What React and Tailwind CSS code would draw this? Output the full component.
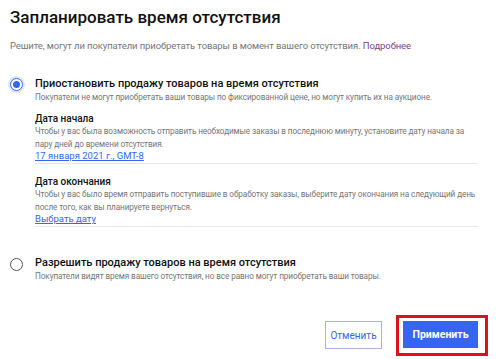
import React, { useState } from 'react';

const Radio = ({ checked, onClick }) => (
  <button
    type="button"
    onClick={onClick}
    className={`flex h-[13px] w-[13px] shrink-0 items-center justify-center rounded-full border ${
      checked ? 'border-[#3665f3] shadow-[0_0_0_2px_#dfe6fb]' : 'border-[#555]'
    } bg-white`}
  >
    {checked && <span className="h-[7px] w-[7px] rounded-full bg-[#3665f3]" />}
  </button>
);

const DateBlock = ({ title, text, link }) => (
  <div className="border-b border-[#e8e8e8] pb-[1px]">
    <div className="text-[10px] font-medium leading-[13px] text-[#111]">{title}</div>
    <p className="text-[8.2px] leading-[12.5px] tracking-[-0.1px] text-[#767676]">{text}</p>
    <a href="#" className="block text-[9.5px] leading-[12px] text-[#3665f3] underline">
      {link}
    </a>
  </div>
);

const App = () => {
  const [mode, setMode] = useState('pause');

  return (
    <div className="h-[359px] w-[500px] overflow-hidden bg-white px-[10px] pt-[6px] font-['Roboto',Arial,sans-serif]">
      <h1 className="text-[17px] font-medium leading-[22px] text-[#111]">Запланировать время отсутствия</h1>
      <p className="mt-[11px] text-[9.5px] leading-[13px] tracking-[-0.1px] text-[#767676]">
        Решите, могут ли покупатели приобретать товары в момент вашего отсутствия.{' '}
        <a href="#" className="text-[#7b3f8c]">
          Подробнее
        </a>
      </p>

      <div className="mt-[25px] flex items-start gap-[12px]">
        <div className="pt-[1px]">
          <Radio checked={mode === 'pause'} onClick={() => setMode('pause')} />
        </div>
        <div className="flex-1 pr-[12px]">
          <div className="text-[11px] font-medium leading-[14px] text-[#111]">
            Приостановить продажу товаров на время отсутствия
          </div>
          <p className="text-[8.2px] leading-[13px] tracking-[-0.1px] text-[#767676]">
            Покупатели не могут приобретать ваши товары по фиксированной цене, но могут купить их на аукционе.
          </p>
          <div className="mt-[8px] flex flex-col gap-[11px]">
            <DateBlock
              title="Дата начала"
              text="Чтобы у вас была возможность отправить необходимые заказы в последнюю минуту, установите дату начала за пару дней до времени отсутствия."
              link="17 января 2021 г., GMT-8"
            />
            <DateBlock
              title="Дата окончания"
              text="Чтобы у вас было время отправить поступившие в обработку заказы, выберите дату окончания на следующий день после того, как вы планируете вернуться."
              link="Выбрать дату"
            />
          </div>
        </div>
      </div>

      <div className="mt-[29px] flex items-start gap-[12px]">
        <div className="pt-[2px]">
          <Radio checked={mode === 'allow'} onClick={() => setMode('allow')} />
        </div>
        <div>
          <div className="text-[11px] font-medium leading-[14px] text-[#111]">
            Разрешить продажу товаров на время отсутствия
          </div>
          <p className="text-[8.2px] leading-[13px] tracking-[-0.1px] text-[#767676]">
            Покупатели видят время вашего отсутствия, но все равно могут приобретать ваши товары.
          </p>
        </div>
      </div>

      <div className="mt-[32px] flex items-start justify-end gap-[14px] pr-[2px]">
        <button className="mt-[6px] h-[28px] w-[57px] border border-[#a9b4dc] bg-white text-[10px] text-[#3665f3]">
          Отменить
        </button>
        <div className="border-[3px] border-[#e0101c] pb-[5px] pl-[4px] pr-[7px] pt-[3px]">
          <button className="h-[27px] w-[75px] bg-[#3665f3] text-[10.5px] font-bold text-white">Применить</button>
        </div>
      </div>
    </div>
  );
};

export default App;
